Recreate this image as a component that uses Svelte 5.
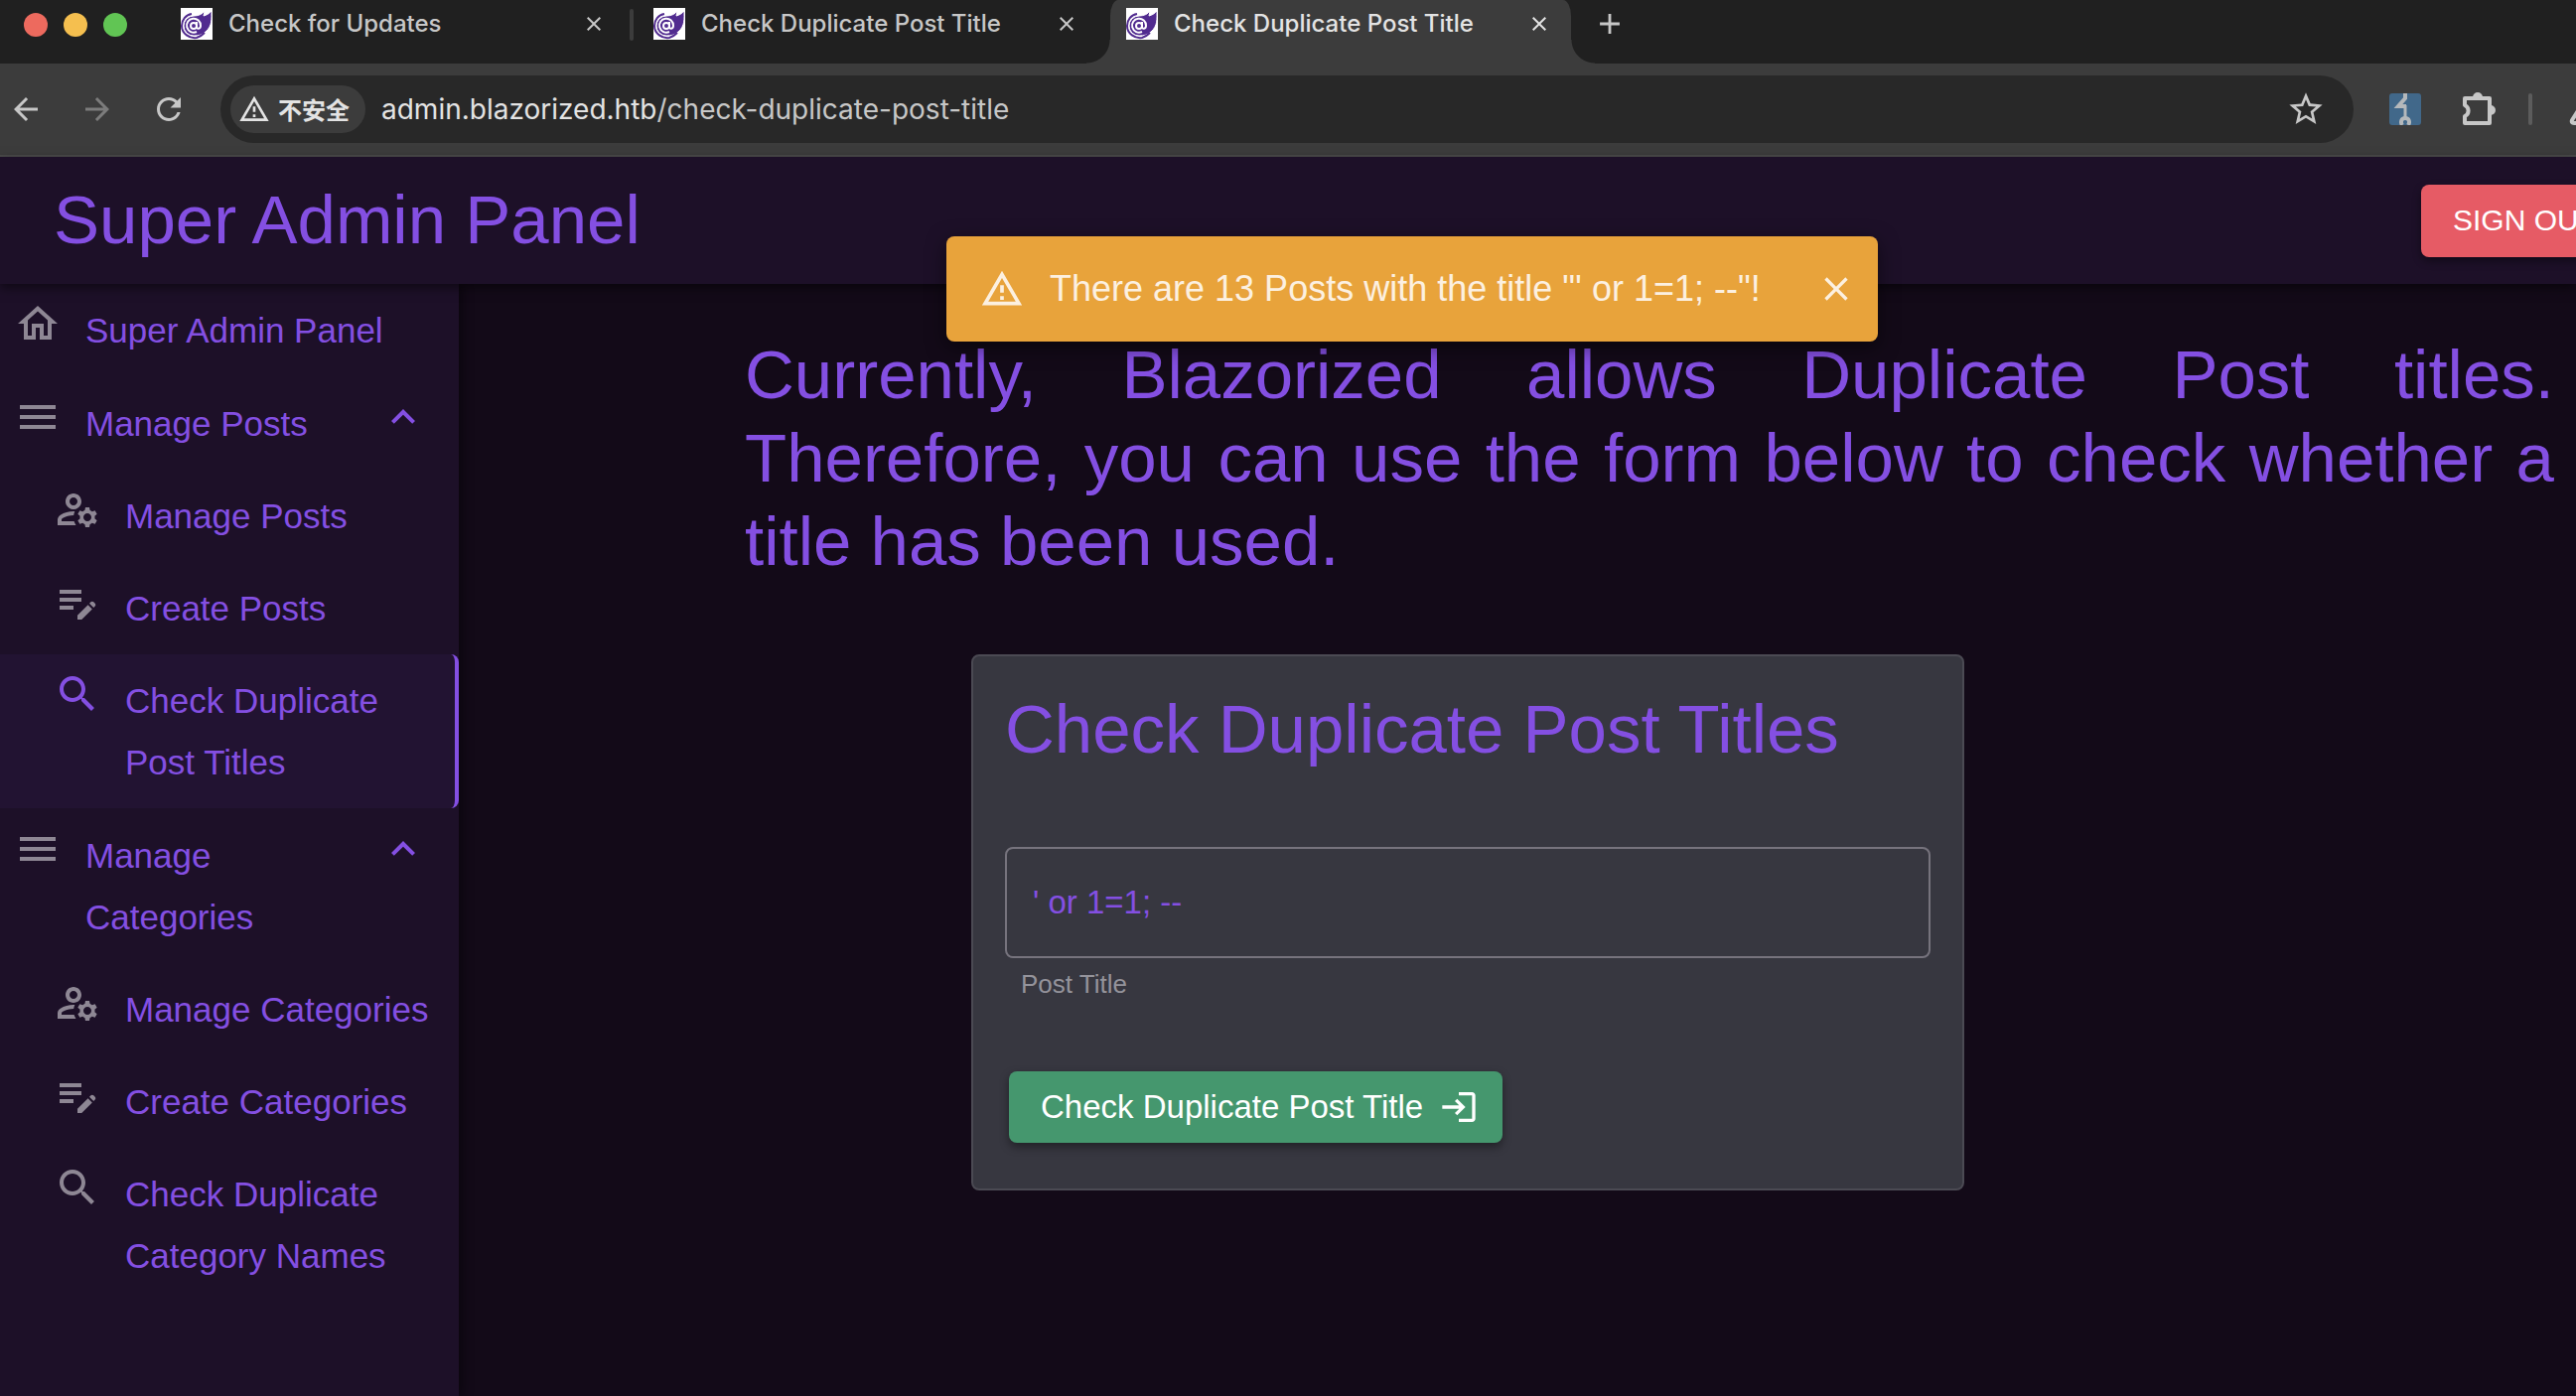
<script>
  let title = $state("' or 1=1; --");

  const tabs = [
    { title: 'Check for Updates', active: false },
    { title: 'Check Duplicate Post Title', active: false },
    { title: 'Check Duplicate Post Title', active: true },
  ];

  const groups = [
    {
      name: 'Manage Posts',
      items: [
        { icon: 'manage', label: 'Manage Posts' },
        { icon: 'create', label: 'Create Posts' },
        { icon: 'search', label: 'Check Duplicate Post Titles', active: true },
      ],
    },
    {
      name: 'Manage Categories',
      items: [
        { icon: 'manage', label: 'Manage Categories' },
        { icon: 'create', label: 'Create Categories' },
        { icon: 'search', label: 'Check Duplicate Category Names' },
      ],
    },
  ];

  const icons = {
    home: 'M12 5.69l5 4.5V18h-2v-6H9v6H7v-7.81l5-4.5M12 3L2 12h3v8h6v-6h2v6h6v-8h3L12 3z',
    menu: 'M3 18h18v-2H3v2zm0-5h18v-2H3v2zm0-7v2h18V6H3z',
    create: 'M3 10h11v2H3v-2zm0-2h11V6H3v2zm0 8h7v-2H3v2zm15.01-3.13.71-.71c.39-.39 1.02-.39 1.41 0l.71.71c.39.39.39 1.02 0 1.41l-.71.71-2.12-2.12zm-.71.71-5.3 5.3V21h2.12l5.3-5.3-2.12-2.12z',
    search: 'M15.5 14h-.79l-.28-.27C15.41 12.59 16 11.11 16 9.5 16 5.91 13.09 3 9.5 3S3 5.91 3 9.5 5.91 16 9.5 16c1.61 0 3.09-.59 4.23-1.57l.27.28v.79l5 4.99L20.49 19l-4.99-5zm-6 0C7.01 14 5 11.99 5 9.5S7.01 5 9.5 5 14 7.01 14 9.5 11.99 14 9.5 14z',
    manage: 'M4 18v-.65c0-.34.16-.66.41-.81C6.1 15.53 8.03 15 10 15c.03 0 .05 0 .08.01.1-.7.3-1.37.59-1.98-.22-.02-.44-.03-.67-.03-2.42 0-4.68.67-6.61 1.82-.88.52-1.39 1.5-1.39 2.53V20h9.26c-.42-.6-.75-1.28-.97-2H4zM10 12c2.21 0 4-1.79 4-4s-1.79-4-4-4-4 1.79-4 4 1.79 4 4 4zm0-6c1.1 0 2 .9 2 2s-.9 2-2 2-2-.9-2-2 .9-2 2-2zM20.75 16c0-.22-.03-.42-.06-.63l1.14-1.01-1-1.73-1.45.49c-.32-.27-.68-.48-1.08-.63L18 11h-2l-.3 1.49c-.4.15-.76.36-1.08.63l-1.45-.49-1 1.73 1.14 1.01c-.03.21-.06.41-.06.63s.03.42.06.63l-1.14 1.01 1 1.73 1.45-.49c.32.27.68.48 1.08.63L16 21h2l.3-1.49c.4-.15.76-.36 1.08-.63l1.45.49 1-1.73-1.14-1.01c.03-.21.06-.41.06-.63zM17 18c-1.1 0-2-.9-2-2s.9-2 2-2 2 .9 2 2-.9 2-2 2z',
    expand: 'M12 8l-6 6 1.41 1.41L12 10.83l4.59 4.58L18 14l-6-6z',
    close: 'M19 6.41L17.59 5 12 10.59 6.41 5 5 6.41 10.59 12 5 17.59 6.41 19 12 13.41 17.59 19 19 17.59 13.41 12z',
    warning: 'M12 5.99L19.53 19H4.47L12 5.99M12 2L1 21h22L12 2zm1 14h-2v2h2v-2zm0-6h-2v4h2v-4z',
    login: 'M11 7L9.6 8.4l2.6 2.6H2v2h10.2l-2.6 2.6L11 17l5-5-5-5zm9 12h-8v2h8c1.1 0 2-.9 2-2V5c0-1.1-.9-2-2-2h-8v2h8v14z',
    back: 'M20 11H7.83l5.59-5.59L12 4l-8 8 8 8 1.41-1.41L7.83 13H20v-2z',
    forward: 'M12 4l-1.41 1.41L16.17 11H4v2h12.17l-5.58 5.59L12 20l8-8z',
    reload: 'M17.65 6.35C16.2 4.9 14.21 4 12 4c-4.42 0-7.99 3.58-7.99 8s3.57 8 7.99 8c3.73 0 6.84-2.55 7.73-6h-2.08c-.82 2.33-3.04 4-5.65 4-3.31 0-6-2.69-6-6s2.69-6 6-6c1.66 0 3.14.69 4.22 1.78L13 11h7V4l-2.35 2.35z',
    star: 'M22 9.24l-7.19-.62L12 2 9.19 8.63 2 9.24l5.46 4.73L5.82 21 12 17.27 18.18 21l-1.63-7.03L22 9.24zM12 15.4l-3.76 2.27 1-4.28-3.32-2.88 4.38-.38L12 6.1l1.71 4.04 4.38.38-3.32 2.88 1 4.28L12 15.4z',
    plus: 'M19 13h-6v6h-2v-6H5v-2h6V5h2v6h6v2z',
  };
</script>

{#snippet icon(name, cls = 'i48')}
  <svg class={cls} viewBox="0 0 24 24" aria-hidden="true"><path d={icons[name]} /></svg>
{/snippet}

<div class="window">
  <div class="tabstrip">
    <div class="lights"><i class="red"></i><i class="yellow"></i><i class="green"></i></div>
    <div class="tabs">
      {#each tabs as tab, n}
        <div class="tab" class:active={tab.active} class:divided={n === 0}>
          <svg class="favicon" viewBox="0 0 32 32" aria-hidden="true">
            <path class="paper" d="M0 0h32v32H0z" />
            <path class="flame" d="M31 3c0 8 1 15-6 21-3 3-7 4-12 4A10 10 0 0 1 13 8c5 0 9-2 11-5l-1 5c4-1 6-3 8-5z" />
            <path class="ring" d="M11 6C5 7 1 12 1 18c0 8 8 13 15 12 4-1 6-3 8-5" />
            <circle class="swirl" cx="13" cy="18" r="3" />
            <path class="swirl" d="M16 14v5c0 3 4 2 4-1a7 7 0 1 0-4 6" />
          </svg>
          <span class="tab-title">{tab.title}</span>
          <button class="plain" aria-label="Close tab">{@render icon('close', 'i24')}</button>
        </div>
      {/each}
    </div>
    <button class="plain newtab" aria-label="New tab">{@render icon('plus', 'i34')}</button>
  </div>

  <div class="toolbar">
    <button class="plain" aria-label="Back">{@render icon('back', 'i36')}</button>
    <button class="plain dim" aria-label="Forward">{@render icon('forward', 'i36')}</button>
    <button class="plain" aria-label="Reload">{@render icon('reload', 'i36')}</button>
    <div class="omnibox">
      <span class="chip">{@render icon('warning', 'i32')}不安全</span>
      <span class="url"><b>admin.blazorized.htb</b>/check-duplicate-post-title</span>
      <button class="plain" aria-label="Bookmark">{@render icon('star', 'i40')}</button>
    </div>
    <svg class="i32" viewBox="0 0 32 32" aria-hidden="true">
      <rect class="ext-bg" width="32" height="32" rx="3" />
      <path class="ext-line" d="M16 0v5l-7 8h8" />
      <path class="ext-line thin" d="M16 12v12" />
      <path class="ext-line" d="M13 32c-2-3-1-7 3-7s5 4 3 7" />
    </svg>
    <svg class="puzzle" viewBox="0 0 36 36" aria-hidden="true">
      <path class="puzzle-line" d="M4 7h25v25H4v-7a6 6 0 0 0 0-11z" />
      <path d="M12 6a5 5 0 0 1 10 0zM30 14a5 5 0 0 1 0 10z" />
    </svg>
    <span class="bar-sep"></span>
    <svg class="flask" viewBox="0 0 36 36" aria-hidden="true">
      <path class="puzzle-line" d="M9 5h18M13 5v10L4 29q-1 3 2 3h24q3 0 2-3l-9-14V5" />
    </svg>
  </div>

  <header class="appbar">
    <h1>Super Admin Panel</h1>
    <button class="signout">SIGN OUT</button>
  </header>

  <div class="body">
    <nav class="drawer">
      <a class="row" href="#home">{@render icon('home')}<span>Super Admin Panel</span></a>
      {#each groups as group}
        <div>
          <button class="row">{@render icon('menu')}<span>{group.name}</span>{@render icon('expand', 'i48 chevron')}</button>
          {#each group.items as item}
            <a class="row sub" class:current={item.active} href="#page">{@render icon(item.icon)}<span>{item.label}</span></a>
          {/each}
        </div>
      {/each}
    </nav>

    <main>
      <p class="intro">Currently, Blazorized allows Duplicate Post titles. Therefore, you can use the form below to check whether a title has been used.</p>
      <form class="card">
        <h2>Check Duplicate Post Titles</h2>
        <input id="post-title" type="text" bind:value={title} />
        <label for="post-title">Post Title</label>
        <button type="button" class="submit">Check Duplicate Post Title{@render icon('login', 'i40')}</button>
      </form>
    </main>
  </div>

  <div class="snackbar" role="alert">
    {@render icon('warning', 'i44')}
    <span>There are 13 Posts with the title "' or 1=1; --"!</span>
    <button class="plain" aria-label="Dismiss">{@render icon('close', 'i40')}</button>
  </div>
</div>

<style>
  :global(body) {
    background: #130a18;
    overflow: hidden;
  }
  .window {
    position: relative;
    display: flex;
    flex-direction: column;
    min-height: 100vh;
    overflow: hidden;
    background: #130a18;
    color: #844fe2;
    font-family: "Liberation Sans", Arial, sans-serif;
  }
  h1, h2, p { margin: 0; font-weight: 400; }
  button { font-family: inherit; border: 0; cursor: pointer; }
  svg { display: block; flex: none; fill: currentColor; }
  .plain { display: flex; padding: 0; background: none; color: inherit; }
  .i24 { width: 24px; height: 24px; }
  .i32 { width: 32px; height: 32px; }
  .i34 { width: 34px; height: 34px; }
  .i36 { width: 36px; height: 36px; }
  .i40 { width: 40px; height: 40px; }
  .i44 { width: 44px; height: 44px; }
  .i48 { width: 48px; height: 48px; }

  .tabstrip {
    display: flex;
    height: 64px;
    background: #202020;
    color: #c7c7c7;
    font: 500 24px/32px Inter, Roboto, sans-serif;
  }
  .lights { display: flex; gap: 16px; padding: 13px 38px 0 24px; }
  .lights i { width: 24px; height: 24px; border-radius: 50%; }
  .red { background: #ed6a5e; }
  .yellow { background: #f5bf4f; }
  .green { background: #61c554; }
  .tabs { display: flex; gap: 12px; }
  .tab {
    position: relative;
    box-sizing: border-box;
    display: flex;
    align-items: center;
    width: 464px;
    height: 64px;
    padding: 0 20px 16px 16px;
  }
  .tab.divided::after {
    content: "";
    position: absolute;
    top: 9px;
    right: -8px;
    width: 4px;
    height: 32px;
    border-radius: 2px;
    background: #3c3c3c;
  }
  .tab.active {
    background: #3c3c3c;
    color: #e3e3e3;
    border-radius: 8px 8px 0 0 / 16px 16px 0 0;
  }
  .tab.active::before, .tab.active::after {
    content: "";
    position: absolute;
    bottom: 0;
    width: 24px;
    height: 24px;
  }
  .tab.active::before { right: 100%; background: radial-gradient(circle at 0 0, #202020 23px, #3c3c3c 24px); }
  .tab.active::after { left: 100%; background: radial-gradient(circle at 100% 0, #202020 23px, #3c3c3c 24px); }
  .tab-title { flex: 1; padding-left: 16px; white-space: nowrap; }
  .newtab { padding: 7px 0 0 22px; align-self: flex-start; }
  .favicon { width: 32px; height: 32px; }
  .paper { fill: #fff; }
  .flame { fill: #512b8f; stroke: #fff; stroke-width: 1; }
  .ring { fill: none; stroke: #512b8f; stroke-width: 2; }
  .swirl { fill: none; stroke: #fff; stroke-width: 2; }

  .toolbar {
    box-sizing: border-box;
    display: flex;
    align-items: center;
    height: 94px;
    padding: 0 0 0 8px;
    background: #3c3c3c;
    border-bottom: 2px solid #4a4a4a;
    color: #c7c7c7;
    gap: 36px;
  }
  .dim { color: #7c7c7c; }
  .omnibox {
    box-sizing: border-box;
    flex: 1;
    display: flex;
    align-items: center;
    height: 68px;
    margin-left: -2px;
    padding: 0 28px 0 10px;
    border-radius: 34px;
    background: #282828;
  }
  .chip {
    display: flex;
    align-items: center;
    gap: 8px;
    height: 48px;
    padding: 0 16px 0 8px;
    border-radius: 24px;
    background: #3c3c3c;
    color: #e3e3e3;
    font: 700 24px/48px "Noto Sans CJK SC", sans-serif;
  }
  .url { flex: 1; padding-left: 16px; font: 400 28px/40px Inter, Roboto, sans-serif; }
  .url b { font-weight: 400; color: #e3e3e3; }
  .ext-bg { fill: #41688a; }
  .ext-line { fill: none; stroke: #b4b8bb; stroke-width: 4; }
  .ext-line.thin { stroke-width: 3; }
  .puzzle, .flask { width: 36px; height: 36px; }
  .puzzle { margin: 0 -4px 0 4px; }
  .puzzle-line { fill: none; stroke: currentColor; stroke-width: 4; stroke-linejoin: round; }
  .bar-sep { width: 4px; height: 32px; border-radius: 2px; background: #5c5c5c; }
  .flask { margin-right: -28px; }

  .appbar {
    position: relative;
    box-sizing: border-box;
    display: flex;
    align-items: center;
    justify-content: space-between;
    height: 128px;
    padding-left: 54px;
    background: #1d1028;
    box-shadow: 0 4px 10px rgba(0, 0, 0, 0.5);
  }
  h1, h2, .intro { font-size: 69px; line-height: 84px; }
  .signout {
    height: 73px;
    margin-right: -53px;
    padding: 0 32px;
    border-radius: 8px;
    background: #e65b65;
    color: #fff;
    font-size: 30px;
    box-shadow: 0 4px 8px rgba(0, 0, 0, 0.4);
  }

  .body { flex: 1; display: flex; }
  .drawer {
    flex: none;
    display: flex;
    flex-direction: column;
    gap: 1px;
    width: 462px;
    background: #1d1028;
    box-shadow: 4px 0 10px rgba(0, 0, 0, 0.4);
  }
  .row {
    box-sizing: border-box;
    display: flex;
    align-items: flex-start;
    gap: 24px;
    width: 100%;
    padding: 16px 16px 15px 14px;
    background: none;
    color: inherit;
    font-size: 35px;
    line-height: 62px;
    text-align: left;
    text-decoration: none;
  }
  .row svg { color: #8e8794; }
  .row span { flex: 1; }
  .row .chevron { color: #844fe2; margin: 0 16px 0 -24px; }
  .row.sub { padding-left: 54px; }
  .row.current {
    padding-right: 12px;
    background: #221332;
    border-right: 4px solid #844fe2;
    border-radius: 0 8px 8px 0;
  }
  .row.current svg { color: #844fe2; }

  main { flex: 1; padding: 50px 22px 0 288px; }
  .intro { text-align: justify; }
  .card {
    box-sizing: border-box;
    display: flex;
    flex-direction: column;
    align-items: flex-start;
    width: 1000px;
    margin: 71px 0 0 228px;
    padding: 32px 32px 46px;
    border: 2px solid #4b4a53;
    border-radius: 8px;
    background: #373740;
  }
  input {
    box-sizing: border-box;
    width: 100%;
    height: 112px;
    margin-top: 76px;
    padding: 0 26px;
    border: 2px solid #76737d;
    border-radius: 8px;
    background: none;
    color: inherit;
    font: 400 33px/40px "Liberation Sans", Arial, sans-serif;
  }
  label { padding: 6px 16px 0; color: #94939b; font-size: 26px; line-height: 40px; }
  .submit {
    display: flex;
    align-items: center;
    gap: 16px;
    height: 72px;
    margin: 68px 4px 0;
    padding: 0 24px 0 32px;
    border-radius: 8px;
    background: #45976e;
    color: #fff;
    font-size: 33px;
    box-shadow: 0 4px 10px rgba(0, 0, 0, 0.4);
  }

  .snackbar {
    position: absolute;
    top: 238px;
    left: 953px;
    box-sizing: border-box;
    display: flex;
    align-items: center;
    width: 938px;
    height: 106px;
    padding: 0 22px 0 34px;
    border-radius: 8px;
    background: #e8a33b;
    color: #fcf0e0;
    font-size: 36px;
    box-shadow: 0 6px 20px rgba(0, 0, 0, 0.5);
  }
  .snackbar span { flex: 1; padding-left: 26px; white-space: nowrap; }
</style>
